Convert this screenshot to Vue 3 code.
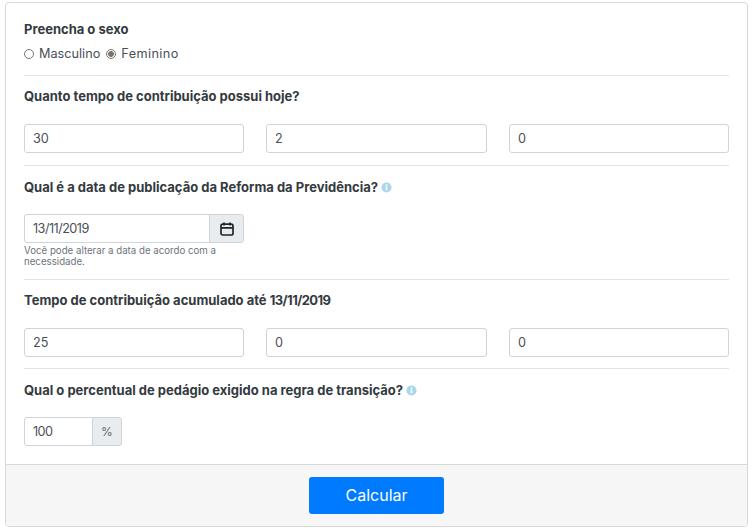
<template>
  <div class="page">
    <div class="card">
      <div class="body">
        <section class="block first">
          <h4 class="label">Preencha o sexo</h4>
          <div class="radios">
            <label><span class="radio"></span>Masculino</label>
            <label class="fem"><span class="radio on"></span>Feminino</label>
          </div>
        </section>

        <section class="block second">
          <h4 class="label">Quanto tempo de contribuição possui hoje?</h4>
          <div class="row">
            <div v-for="(v, i) in hoje" :key="i" class="field">{{ v }}</div>
          </div>
        </section>

        <section class="block third">
          <h4 class="label">
            Qual é a data de publicação da Reforma da Previdência?
            <svg class="info" viewBox="0 0 12 12"><circle cx="6" cy="6" r="5.5" fill="#a9d6e8" /><rect x="5.1" y="5" width="1.8" height="4" fill="#fff" /><rect x="5.1" y="2.6" width="1.8" height="1.6" fill="#fff" /></svg>
          </h4>
          <div class="group date">
            <div class="field grow tight">13/11/2019</div>
            <div class="addon">
              <svg viewBox="0 0 14 14" width="14" height="14" fill="none" stroke="#212529" stroke-width="1.7">
                <rect x="1" y="2.2" width="12" height="10.8" rx="1.8" />
                <path d="M1 5.8h12M4 .4v3M10 .4v3" />
              </svg>
            </div>
          </div>
          <small class="hint">Você pode alterar a data de acordo com a necessidade.</small>
        </section>

        <section class="block fourth">
          <h4 class="label">Tempo de contribuição acumulado até <span class="tight">13/11/2019</span></h4>
          <div class="row">
            <div v-for="(v, i) in acumulado" :key="i" class="field">{{ v }}</div>
          </div>
        </section>

        <section class="block last">
          <h4 class="label">
            Qual o percentual de pedágio exigido na regra de transição?
            <svg class="info" viewBox="0 0 12 12"><circle cx="6" cy="6" r="5.5" fill="#a9d6e8" /><rect x="5.1" y="5" width="1.8" height="4" fill="#fff" /><rect x="5.1" y="2.6" width="1.8" height="1.6" fill="#fff" /></svg>
          </h4>
          <div class="group percent">
            <div class="field grow tight">100</div>
            <div class="addon">%</div>
          </div>
        </section>
      </div>
      <div class="footer">
        <button class="btn">Calcular</button>
      </div>
    </div>
  </div>
</template>

<script setup>
const hoje = [30, 2, 0];
const acumulado = [25, 0, 0];
</script>

<style>
body {
  margin: 0;
  background: #fff;
}
</style>

<style scoped>
.page {
  width: 753px;
  height: 532px;
  padding: 2px 5px 0;
  box-sizing: border-box;
  font-family: Inter, "Open Sans", sans-serif;
  color: #495057;
}
.card {
  height: 525px;
  box-sizing: border-box;
  border: 1px solid #d9d9d9;
  border-radius: 4px;
  display: flex;
  flex-direction: column;
  overflow: hidden;
}
.body {
  flex: 1;
  padding: 0 18px;
}
.block {
  border-bottom: 1px solid #e3e3e3;
  box-sizing: border-box;
}
.block.first { height: 73px; padding-top: 18px; }
.block.second { height: 90px; padding-top: 12px; }
.block.third { height: 114px; padding-top: 13px; }
.block.fourth { height: 89px; padding-top: 12px; }
.block.last { border-bottom: 0; padding-top: 13px; }
.label {
  margin: 0;
  font-size: 13px;
  line-height: 16px;
  font-weight: 700;
  color: #343a40;
}
.info {
  width: 11px;
  height: 11px;
  margin-left: 0;
  vertical-align: -1px;
}
.radios {
  display: flex;
  gap: 6px;
  margin-top: 9px;
  font-size: 12.7px;
  line-height: 16px;
  font-weight: 400;
}
.radios label {
  display: flex;
  align-items: center;
}
.fem {
  letter-spacing: 0.4px;
}
.radio {
  width: 8px;
  height: 8px;
  margin-right: 5px;
  border: 1px solid #767676;
  border-radius: 50%;
  background: #fff;
  box-sizing: content-box;
}
.radio.on {
  background: radial-gradient(circle, #767676 0 2.6px, #fff 3.2px);
}
.row {
  display: grid;
  grid-template-columns: 220px 221px 220px;
  column-gap: 22px;
  margin-top: 20px;
}
.field {
  height: 29px;
  box-sizing: border-box;
  border: 1px solid #ced4da;
  border-radius: 3px;
  padding: 0 8px;
  font-size: 12.7px;
  line-height: 27px;
  background: #fff;
}
.tight {
  letter-spacing: -0.55px;
}
.group {
  display: flex;
  margin-top: 19px;
}
.group .field {
  border-radius: 3px 0 0 3px;
}
.grow {
  flex: 1;
}
.addon {
  display: flex;
  align-items: center;
  justify-content: center;
  box-sizing: border-box;
  height: 29px;
  border: 1px solid #ced4da;
  margin-left: -1px;
  border-radius: 0 3px 3px 0;
  background: #e9ecef;
  font-size: 12px;
  color: #5f666d;
}
.date {
  width: 220px;
}
.date .addon {
  width: 35px;
}
.percent {
  width: 98px;
}
.percent .addon {
  width: 30px;
}
.hint {
  display: block;
  width: 215px;
  margin-top: 2px;
  font-size: 9.7px;
  line-height: 11px;
  color: #6c757d;
}
.footer {
  height: 62px;
  box-sizing: border-box;
  border-top: 1px solid #d9d9d9;
  background: #f6f6f6;
  display: flex;
  justify-content: center;
  padding-top: 12px;
}
.btn {
  width: 135px;
  height: 37px;
  border: 0;
  border-radius: 3px;
  padding: 0 0 2px;
  background: #007bff;
  color: #fff;
  font-family: inherit;
  font-size: 16px;
}
</style>
